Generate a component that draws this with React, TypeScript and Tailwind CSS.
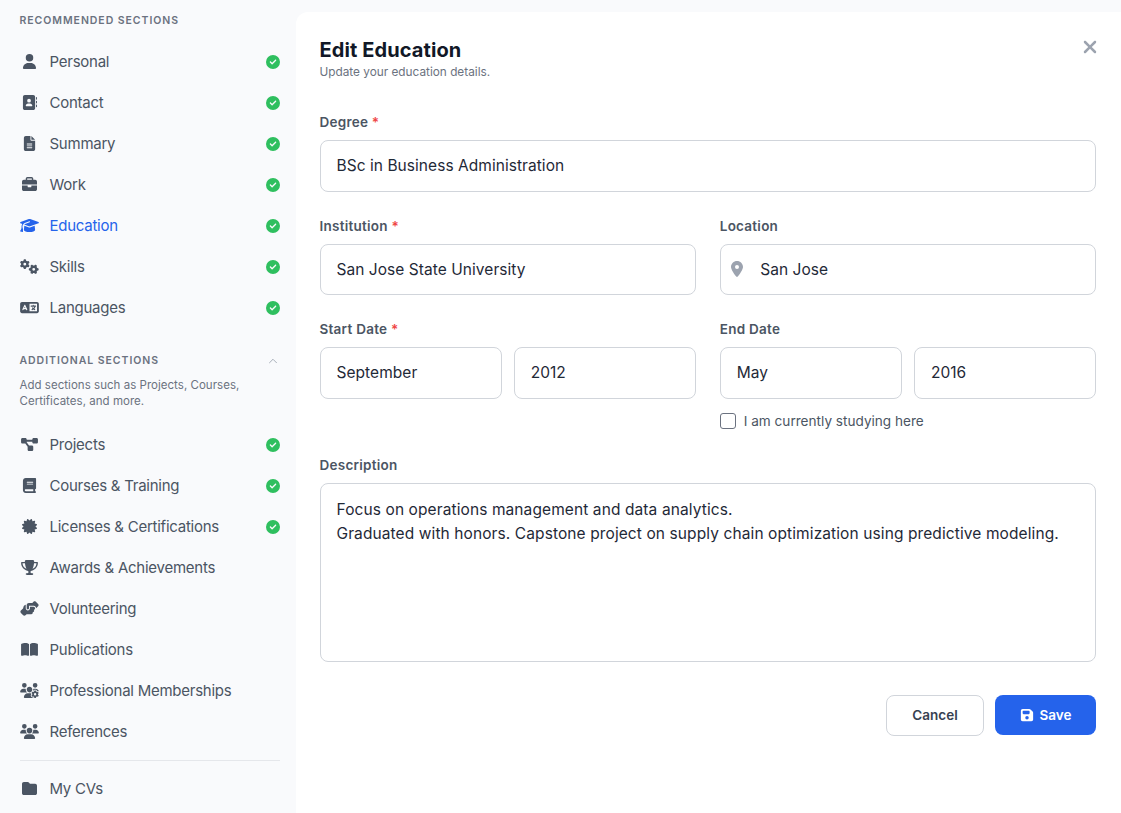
import React from "react";
import {
  FaUser, FaAddressBook, FaFileLines, FaBriefcase, FaGraduationCap, FaGears, FaLanguage,
  FaDiagramProject, FaBook, FaCertificate, FaTrophy, FaHandshakeAngle, FaBookOpen, FaUsersGear,
  FaUsers, FaFolder, FaCircleCheck, FaLocationDot, FaFloppyDisk, FaXmark,
} from "react-icons/fa6";
import { ChevronUp } from "lucide-react";

type Item = { label: string; icon: React.ComponentType<{ className?: string }>; done?: boolean; active?: boolean };

const recommended: Item[] = [
  { label: "Personal", icon: FaUser, done: true },
  { label: "Contact", icon: FaAddressBook, done: true },
  { label: "Summary", icon: FaFileLines, done: true },
  { label: "Work", icon: FaBriefcase, done: true },
  { label: "Education", icon: FaGraduationCap, done: true, active: true },
  { label: "Skills", icon: FaGears, done: true },
  { label: "Languages", icon: FaLanguage, done: true },
];
const additional: Item[] = [
  { label: "Projects", icon: FaDiagramProject, done: true },
  { label: "Courses & Training", icon: FaBook, done: true },
  { label: "Licenses & Certifications", icon: FaCertificate, done: true },
  { label: "Awards & Achievements", icon: FaTrophy },
  { label: "Volunteering", icon: FaHandshakeAngle },
  { label: "Publications", icon: FaBookOpen },
  { label: "Professional Memberships", icon: FaUsersGear },
  { label: "References", icon: FaUsers },
];

function Row({ item }: { item: Item }) {
  const Icon = item.icon;
  return (
    <div className={`flex h-[41px] items-center ${item.active ? "text-[#2563eb]" : "text-[#4b5563]"}`}>
      <Icon className="mb-[2px] h-[15px] w-[19px] shrink-0" />
      <span className="ml-[11px] flex-1 text-[15px] tracking-[-0.25px]">{item.label}</span>
      {item.done && <FaCircleCheck className="mb-[2px] text-[14px] text-[#2fbf5f]" />}
    </div>
  );
}

function Label({ text, required }: { text: string; required?: boolean }) {
  return (
    <label className="mb-[9px] block h-[18px] text-[13.5px] leading-[18px] font-semibold tracking-[0.25px] text-[#4b5563]">
      {text}
      {required && <span className="text-[#ef4444]"> *</span>}
    </label>
  );
}

function Input({ value, h = "h-[52px] pb-[2px]" }: { value: string; h?: string }) {
  return (
    <input
      readOnly
      value={value}
      className={`${h} w-full rounded-[8px] border border-[#d1d5db] bg-white px-4 text-[15.5px] tracking-[0.05px] text-[#1f2937] outline-none`}
    />
  );
}

export default function App() {
  return (
    <div
      className="flex h-[813px] w-full overflow-hidden bg-[#f9fafc]"
      style={{ fontFamily: '"Inter", "Liberation Sans", sans-serif' }}
    >
      <aside className="flex w-[296px] shrink-0 flex-col pt-[13px] pr-[16.5px] pl-[19.5px]">
        <h2 className="mb-[13px] h-[16px] text-[10.5px] leading-[16px] font-semibold tracking-[0.95px] text-[#6b7280]">
          RECOMMENDED SECTIONS
        </h2>
        {recommended.map((i) => <Row key={i.label} item={i} />)}
        <div className="mt-[24px] flex h-[16px] items-center justify-between">
          <h2 className="text-[10.5px] leading-[16px] font-semibold tracking-[0.95px] text-[#6b7280]">ADDITIONAL SECTIONS</h2>
          <ChevronUp className="h-[14px] w-[14px] text-[#9ca3af]" strokeWidth={1.5} />
        </div>
        <p className="mt-[8px] mb-[16px] text-[11.5px] leading-[16px] tracking-[0.03px] text-[#6b7280]">
          Add sections such as Projects, Courses, Certificates, and more.
        </p>
        {additional.map((i) => <Row key={i.label} item={i} />)}
        <div className="mt-[7px] border-t border-[#e5e7eb]" />
        <div className="mt-[8px]"><Row item={{ label: "My CVs", icon: FaFolder }} /></div>
      </aside>

      <main className="relative mt-[12px] flex-1 rounded-tl-[12px] bg-white pt-[26px] pr-[25px] pl-[23.5px]">
        <FaXmark className="absolute top-[25px] right-[21px] text-[20px] text-[#9ca3af]" />
        <h1 className="h-[24px] text-[20px] leading-[24px] font-bold tracking-[0.1px] text-[#111827]">Edit Education</h1>
        <p className="mt-[1px] h-[18px] text-[11.8px] leading-[18px] text-[#6b7280]">Update your education details.</p>

        <div className="mt-[32px]">
          <Label text="Degree" required />
          <Input value="BSc in Business Administration" />
        </div>

        <div className="mt-[25px] grid grid-cols-2 gap-x-[24px]">
          <div>
            <Label text="Institution" required />
            <Input value="San Jose State University" h="h-[51px]" />
          </div>
          <div>
            <Label text="Location" />
            <div className="relative">
              <FaLocationDot className="absolute top-[17px] left-[9.5px] text-[16px] text-[#9ca3af]" />
              <input
                readOnly
                value="San Jose"
                className="h-[51px] w-full rounded-[8px] border border-[#d1d5db] bg-white pr-4 pl-[39.5px] text-[15.5px] tracking-[0.05px] text-[#1f2937] outline-none"
              />
            </div>
          </div>
        </div>

        <div className="mt-[25px] grid grid-cols-2 gap-x-[24px]">
          <div>
            <Label text="Start Date" required />
            <div className="grid grid-cols-2 gap-x-[12px]">
              <Input value="September" />
              <Input value="2012" />
            </div>
          </div>
          <div>
            <Label text="End Date" />
            <div className="grid grid-cols-2 gap-x-[12px]">
              <Input value="May" />
              <Input value="2016" />
            </div>
            <div className="mt-[14px] flex h-[16px] items-center">
              <span className="h-[16px] w-[16px] rounded-[3px] border border-[#6b7280] bg-white" />
              <span className="ml-[8px] text-[13.6px] text-[#4b5563]">I am currently studying here</span>
            </div>
          </div>
        </div>

        <div className="mt-[27px]">
          <Label text="Description" />
          <textarea
            readOnly
            value={"Focus on operations management and data analytics.\nGraduated with honors. Capstone project on supply chain optimization using predictive modeling."}
            className="block h-[179px] w-full resize-none rounded-[8px] border border-[#d1d5db] bg-white px-4 py-[14px] text-[15.5px] leading-[24px] tracking-[0.1px] text-[#1f2937] outline-none"
          />
        </div>

        <div className="mt-[33px] flex justify-end gap-[11px]">
          <button className="h-[41px] w-[98px] rounded-[8px] border border-[#d1d5db] bg-white text-[13.5px] font-semibold text-[#374151]">
            Cancel
          </button>
          <button className="flex h-[40px] w-[101px] items-center justify-center gap-[6px] rounded-[8px] bg-[#2563eb] text-[13.5px] font-semibold text-white">
            <FaFloppyDisk className="text-[14px]" />
            Save
          </button>
        </div>
      </main>
    </div>
  );
}
